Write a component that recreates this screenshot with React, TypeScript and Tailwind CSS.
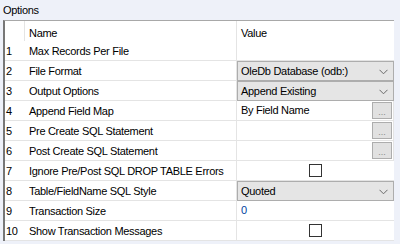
import React from "react";

type Row = { n: number; name: string; kind: "text" | "select" | "button" | "check"; value?: string; blue?: boolean };

const rows: Row[] = [
  { n: 1, name: "Max Records Per File", kind: "text", value: "" },
  { n: 2, name: "File Format", kind: "select", value: "OleDb Database (odb:)" },
  { n: 3, name: "Output Options", kind: "select", value: "Append Existing" },
  { n: 4, name: "Append Field Map", kind: "button", value: "By Field Name" },
  { n: 5, name: "Pre Create SQL Statement", kind: "button", value: "" },
  { n: 6, name: "Post Create SQL Statement", kind: "button", value: "" },
  { n: 7, name: "Ignore Pre/Post SQL DROP TABLE Errors", kind: "check" },
  { n: 8, name: "Table/FieldName SQL Style", kind: "select", value: "Quoted" },
  { n: 9, name: "Transaction Size", kind: "text", value: "0", blue: true },
  { n: 10, name: "Show Transaction Messages", kind: "check" },
];

function Chevron() {
  return (
    <svg width="9" height="6" viewBox="0 0 9 6" className="absolute right-[5px] top-[7px]">
      <path d="M0.5 0.8 L4.5 4.8 L8.5 0.8" fill="none" stroke="#6a6a6a" strokeWidth="1" />
    </svg>
  );
}

function ValueCell({ r }: { r: Row }) {
  if (r.kind === "select") {
    return (
      <div className="relative h-[20px] bg-[#e5e5e5] border border-[#adadad] pl-[3px] leading-[18px] text-black">
        {r.value}
        <Chevron />
      </div>
    );
  }
  if (r.kind === "button") {
    return (
      <div className="flex h-[20px] items-center border-b border-[#e4e4e4] border-r border-r-[#e4e4e4]">
        <div className="flex-1 pl-[4px] leading-[19px]">{r.value}</div>
        <div className="mr-[1px] flex h-[17px] w-[20px] items-end justify-center border border-[#adadad] bg-[#e1e1e1] text-[9px] leading-[12px] tracking-normal text-[#8a8a8a]">...</div>
      </div>
    );
  }
  if (r.kind === "check") {
    return (
      <div className="flex h-[20px] items-center justify-center border-b border-[#e4e4e4]">
        <div className="h-[13px] w-[13px] border border-[#333333] bg-white" />
      </div>
    );
  }
  return (
    <div className={"h-[20px] border-b border-[#e4e4e4] pl-[4px] leading-[19px] " + (r.blue ? "text-[#003f9e]" : "text-black")}>
      {r.value}
    </div>
  );
}

export default function App() {
  return (
    <div
      className="h-[244px] w-[400px] overflow-hidden bg-[#eef1f9] text-[11px] tracking-[-0.3px] text-black"
      style={{ fontFamily: '"Liberation Sans", Arial, sans-serif' }}
    >
      <div className="h-[20px] pl-[3px] leading-[20px]">Options</div>
      <div className="ml-[3px] w-[391px] border-l-2 border-t border-l-[#777777] border-t-[#a8a8a8] bg-white">
        <div className="grid grid-cols-[20px_211px_158px]">
          <div className="h-[20px] border-r border-[#e4e4e4]" />
          <div className="h-[20px] pl-[4px] leading-[24px]">Name</div>
          <div className="h-[20px] border-l border-[#e4e4e4] pl-[4px] leading-[24px]">Value</div>
          {rows.map((r) => (
            <React.Fragment key={r.n}>
              <div className="h-[20px] border-b border-[#e4e4e4] pl-[1px] leading-[20px]">{r.n}</div>
              <div className="h-[20px] overflow-hidden whitespace-nowrap border-b border-[#e4e4e4] pl-[4px] leading-[20px]">{r.name}</div>
              <div className="border-l border-[#e4e4e4]">
                <ValueCell r={r} />
              </div>
            </React.Fragment>
          ))}
        </div>
      </div>
    </div>
  );
}
